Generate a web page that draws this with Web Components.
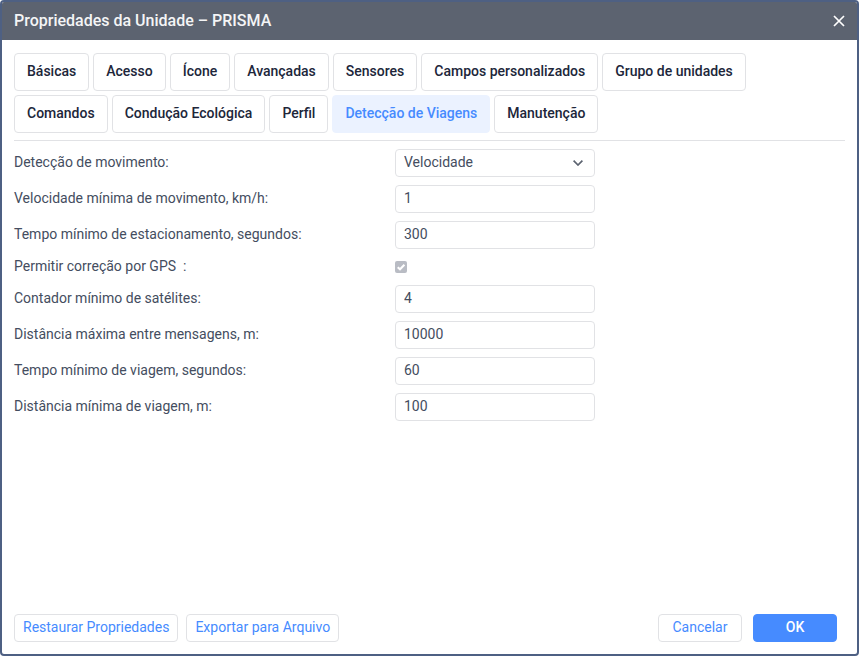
<!DOCTYPE html>
<html lang="pt">
<head>
<meta charset="utf-8">
<title>Propriedades da Unidade</title>
<style>
  html { background: #fff; }
  body {
    margin: 0;
    font: 14px/20px Roboto, "Noto Sans", sans-serif;
    color: #444d60;
    --line: #e1e2e5;
    --accent: #468bff;
    --ink: #20263a;
    --frame: #4e6083;
    --header: #5c6370;
  }
</style>
</head>
<body>
<unit-dialog heading="Propriedades da Unidade – PRISMA">
  <tab-strip slot="tabs">
    <tab-item>Básicas</tab-item>
    <tab-item>Acesso</tab-item>
    <tab-item>Ícone</tab-item>
    <tab-item>Avançadas</tab-item>
    <tab-item>Sensores</tab-item>
    <tab-item>Campos personalizados</tab-item>
    <tab-item>Grupo de unidades</tab-item>
    <tab-item>Comandos</tab-item>
    <tab-item>Condução Ecológica</tab-item>
    <tab-item>Perfil</tab-item>
    <tab-item active>Detecção de Viagens</tab-item>
    <tab-item>Manutenção</tab-item>
  </tab-strip>
  <select-field label="Detecção de movimento:" value="Velocidade"></select-field>
  <text-field label="Velocidade mínima de movimento, km/h:" value="1"></text-field>
  <text-field label="Tempo mínimo de estacionamento, segundos:" value="300"></text-field>
  <check-field label="Permitir correção por GPS &nbsp;:"></check-field>
  <text-field label="Contador mínimo de satélites:" value="4"></text-field>
  <text-field label="Distância máxima entre mensagens, m:" value="10000"></text-field>
  <text-field label="Tempo mínimo de viagem, segundos:" value="60"></text-field>
  <text-field label="Distância mínima de viagem, m:" value="100"></text-field>
  <action-button slot="tools">Restaurar Propriedades</action-button>
  <action-button slot="tools">Exportar para Arquivo</action-button>
  <action-button slot="actions" wide>Cancelar</action-button>
  <action-button slot="actions" wide primary>OK</action-button>
</unit-dialog>

<script>
class BaseElement extends HTMLElement {
  connectedCallback() {
    if (this.shadowRoot) return;
    this.attachShadow({ mode: 'open' }).innerHTML = this.render();
    this.bind();
  }
  render() { return ''; }
  bind() {}
}

customElements.define('unit-dialog', class extends BaseElement {
  render() {
    return `
    <style>
      :host { display: block; }
      section {
        box-sizing: border-box; min-height: 100vh; display: flex; flex-direction: column;
        border: 2px solid var(--frame); border-radius: 4px; overflow: hidden; background: #fff;
      }
      header {
        display: flex; align-items: center; justify-content: space-between;
        height: 38px; padding: 0 12px; background: var(--header); color: #fff;
      }
      h1 { margin: 0; font-size: 16px; line-height: 20px; font-weight: 500; padding-bottom: 1px; color: #f4f5f6; }
      header button {
        border: 0; background: none; padding: 0; width: 12px; height: 12px;
        display: grid; place-items: center; color: #fff; cursor: pointer;
      }
      header svg { display: block; }
      .content { flex: 1; padding: 13px 12px 0; }
      .fields { display: grid; gap: 8px; border-top: 1px solid var(--line); margin-top: 7px; padding-top: 8px; }
      footer { display: flex; justify-content: space-between; padding: 12px 20px 12px 12px; }
      .tools { display: flex; gap: 8px; }
      .actions { display: flex; gap: 11px; }
    </style>
    <section role="dialog" aria-labelledby="title">
      <header>
        <h1 id="title"></h1>
        <button type="button" aria-label="Fechar">
          <svg width="12" height="12" viewBox="0 0 12 12" fill="none" stroke="currentColor" stroke-width="1.7"><path d="M1 1l10 10M11 1L1 11"/></svg>
        </button>
      </header>
      <div class="content">
        <slot name="tabs"></slot>
        <div class="fields"><slot></slot></div>
      </div>
      <footer>
        <div class="tools"><slot name="tools"></slot></div>
        <div class="actions"><slot name="actions"></slot></div>
      </footer>
    </section>`;
  }
  bind() { this.shadowRoot.querySelector('h1').textContent = this.getAttribute('heading'); }
});

customElements.define('tab-strip', class extends BaseElement {
  render() {
    return `<style>:host { display: flex; flex-wrap: wrap; gap: 4px; padding-right: 20px; }</style><slot></slot>`;
  }
  bind() {
    this.addEventListener('click', e => {
      const tab = e.target.closest('tab-item');
      if (!tab) return;
      for (const t of this.children) t.toggleAttribute('active', t === tab);
    });
  }
});

customElements.define('tab-item', class extends BaseElement {
  render() {
    return `
    <style>
      :host { display: block; }
      button {
        display: block; font: inherit; font-weight: 500; color: var(--ink); background: #fff;
        border: 1px solid var(--line); border-radius: 4px; padding: 7px 12px 9px;
        white-space: nowrap; cursor: pointer;
      }
      :host([active]) button { color: var(--accent); background: #ebf2ff; border-color: #ebf2ff; }
    </style>
    <button type="button"><slot></slot></button>`;
  }
});

const rowStyle = `
  :host { display: grid; grid-template-columns: 381px minmax(0, 200px); align-items: center; }
  label { padding-bottom: 2px; line-height: 18px; }
  input, select { box-sizing: border-box; font: inherit; color: inherit; margin: 0; }
  .box {
    width: 100%; height: 28px; padding: 0 8px 2px; background: #fff;
    border: 1px solid var(--line); border-radius: 4px; outline-color: var(--accent);
  }`;

class Field extends BaseElement {
  bind() {
    this.shadowRoot.querySelector('label').textContent = this.getAttribute('label');
    const input = this.shadowRoot.querySelector('input.box');
    if (input) input.value = this.getAttribute('value');
  }
}

customElements.define('text-field', class extends Field {
  render() {
    return `<style>${rowStyle}</style><label for="f"></label><input class="box" id="f" type="text">`;
  }
});

customElements.define('select-field', class extends Field {
  render() {
    return `
    <style>${rowStyle}
      .wrap { display: grid; align-items: center; }
      .wrap > * { grid-area: 1 / 1; }
      select { appearance: none; }
      svg { justify-self: end; margin-right: 12px; pointer-events: none; }
    </style>
    <label for="f"></label>
    <div class="wrap">
      <select class="box" id="f"><option>${this.getAttribute('value')}</option></select>
      <svg width="10" height="6" viewBox="0 0 10 6" fill="none" stroke="#5c6370" stroke-width="1.7"><path d="M.6.7L5 5 9.4.7"/></svg>
    </div>`;
  }
});

customElements.define('check-field', class extends Field {
  render() {
    return `
    <style>${rowStyle}
      .wrap { display: grid; align-items: center; justify-content: start; }
      .wrap > * { grid-area: 1 / 1; }
      input { appearance: none; width: 12px; height: 12px; border-radius: 2px; background: #b9bcc4; }
      svg { position: relative; pointer-events: none; }
    </style>
    <label for="f"></label>
    <div class="wrap">
      <input id="f" type="checkbox" checked disabled>
      <svg width="12" height="12" viewBox="0 0 12 12" fill="none" stroke="#fff" stroke-width="2"><path d="M2.7 6.2L5 8.3 9.4 3.7"/></svg>
    </div>`;
  }
});

customElements.define('action-button', class extends BaseElement {
  render() {
    return `
    <style>
      :host { display: block; }
      button {
        box-sizing: border-box; display: block; height: 28px; font: inherit; color: var(--accent);
        background: #fff; border: 1px solid var(--line); border-radius: 4px; padding: 0 8px 2px;
        white-space: nowrap; cursor: pointer;
      }
      :host([wide]) button { min-width: 84px; }
      :host([primary]) button { background: var(--accent); border-color: var(--accent); color: #fff; font-weight: 500; }
    </style>
    <button type="button"><slot></slot></button>`;
  }
});
</script>
</body>
</html>
